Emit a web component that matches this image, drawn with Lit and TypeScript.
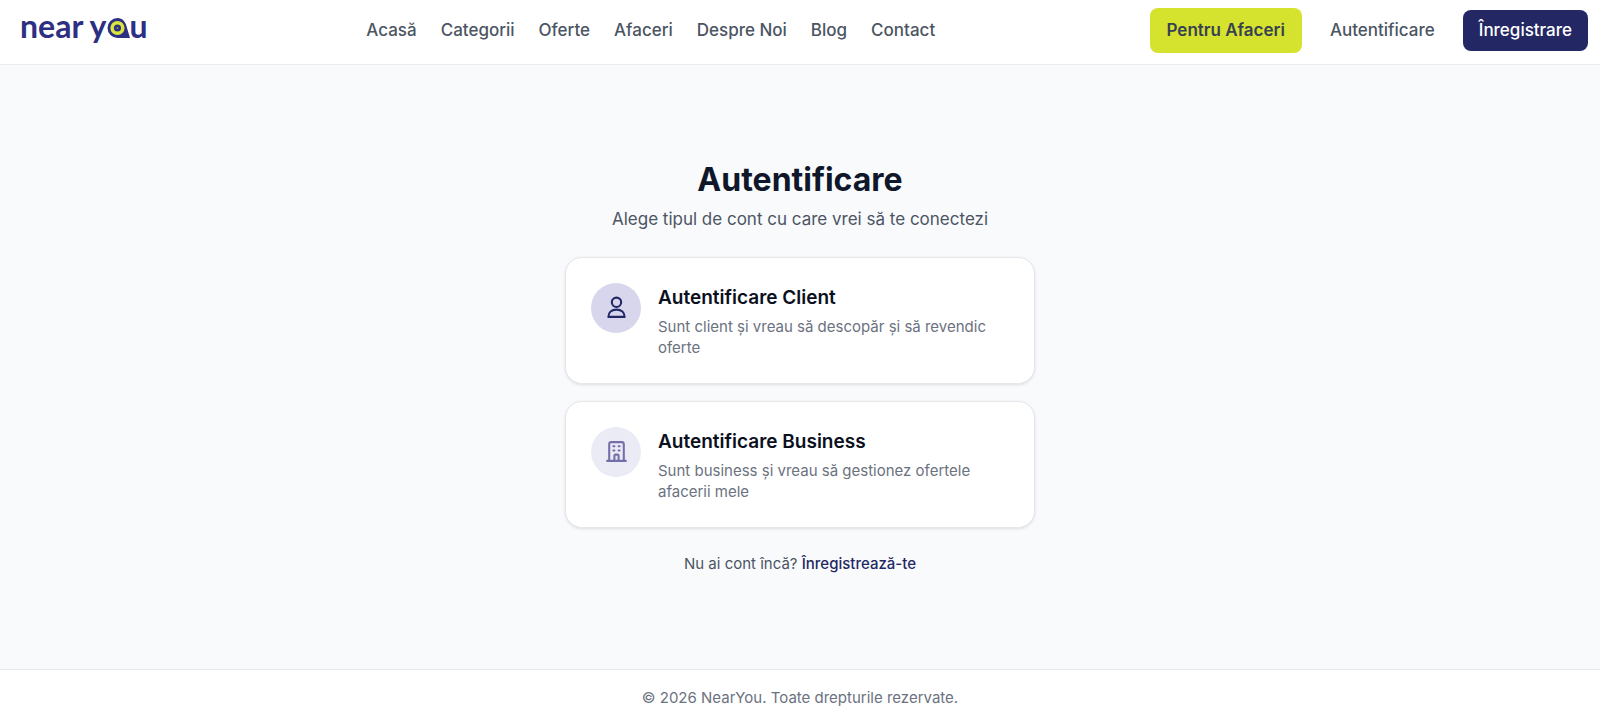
import { LitElement, html, css, svg } from "lit";
import { customElement } from "lit/decorators.js";

const NAV = ["Acasă", "Categorii", "Oferte", "Afaceri", "Despre Noi", "Blog", "Contact"];

const userIcon = svg`
  <circle cx="12" cy="7" r="4.5"></circle>
  <path d="M4.2 21 C4.2 16.6 7.4 14 12 14 C16.6 14 19.8 16.6 19.8 21 Z"></path>`;

const buildingIcon = svg`
  <path d="M19 21V5a2 2 0 0 0-2-2H7a2 2 0 0 0-2 2v16m14 0h2m-2 0h-5m-9 0H3m2 0h5M9 7h1m-1 4h1m4-4h1m-1 4h1m-5 10v-5a1 1 0 0 1 1-1h2a1 1 0 0 1 1 1v5m-4 0h4"></path>`;

const ACCOUNTS = [
  { title: "Autentificare Client", text: "Sunt client și vreau să descopăr și să revendic oferte", icon: userIcon, tone: "client" },
  { title: "Autentificare Business", text: "Sunt business și vreau să gestionez ofertele afacerii mele", icon: buildingIcon, tone: "company" },
];

@customElement("app-root")
export class AppRoot extends LitElement {
  static styles = css`
    :host {
      display: flex;
      flex-direction: column;
      min-height: 100vh;
      background: #f9fafc;
      color: #4b5563;
      font-family: Inter, sans-serif;
      font-size: 17px;
      line-height: 25px;
    }
    * { box-sizing: border-box; }
    a { color: inherit; text-decoration: none; }
    .header {
      display: flex;
      justify-content: space-between;
      align-items: center;
      min-height: 65px;
      padding: 0 12px 4px 20px;
      background: #fff;
      border-bottom: 1px solid #e8ebf0;
    }
    .logo {
      display: flex;
      align-items: baseline;
      min-width: 132px;
      padding-bottom: 8px;
      color: #2c2f82;
      font-family: Lato, sans-serif;
      font-weight: 700;
      font-size: 32px;
      line-height: 40px;
    }
    .pin { width: 23px; height: 20px; }
    .nav { display: flex; gap: 24px; font-weight: 500; }
    .actions { display: flex; align-items: center; font-weight: 500; }
    .partners {
      padding: 10px 17px;
      border-radius: 8px;
      background: #d6e32e;
      color: #374151;
      font-weight: 600;
    }
    .login { padding: 8px 28px; }
    .register {
      padding: 8px 16px;
      border-radius: 8px;
      background: #232864;
      color: #fff;
    }
    .main {
      flex: 1;
      display: flex;
      flex-direction: column;
      align-items: center;
      justify-content: center;
      padding: 0 20px;
    }
    .panel { width: 100%; max-width: 470px; text-align: center; }
    .title {
      margin: 0 0 8px;
      color: #0f172a;
      font-size: 32px;
      font-weight: 700;
      line-height: 38px;
    }
    .subtitle { margin: 0 0 25px; }
    .cards { display: grid; gap: 17px; margin-bottom: 25px; }
    .card {
      display: flex;
      gap: 17px;
      padding: 25px;
      border: 1px solid #e5e7eb;
      border-radius: 17px;
      background: #fff;
      box-shadow: 0 1px 3px rgba(15, 23, 42, 0.12);
      text-align: left;
    }
    .badge {
      flex: none;
      display: grid;
      place-items: center;
      width: 50px;
      height: 50px;
      border-radius: 50%;
    }
    .client { background: #d7d6ed; color: #232864; }
    .company { background: #ebebf5; color: #746fab; }
    .icon {
      width: 25px;
      height: 25px;
      fill: none;
      stroke: currentColor;
      stroke-width: 2;
      stroke-linecap: round;
      stroke-linejoin: round;
    }
    .card-title {
      margin: 0 0 4px;
      color: #0b1020;
      font-size: 19px;
      font-weight: 600;
      line-height: 29px;
    }
    .card-text { margin: 0; color: #6b7280; font-size: 15px; line-height: 21px; }
    .note { margin: 0; font-size: 15px; line-height: 21px; }
    .note-link { color: #232864; font-weight: 500; }
    .footer {
      padding: 17px 16px 12px;
      border-top: 1px solid #e5e7eb;
      background: #fff;
      color: #6b7280;
      font-size: 15px;
      line-height: 21px;
      text-align: center;
    }
  `;

  render() {
    return html`
      <header class="header">
        <a class="logo" href="#" aria-label="near you">
          <span>near y</span>
          <svg class="pin" viewBox="0 0 22 19" aria-hidden="true">
            <path d="M10 0 C15 0 18 4 19 9 L22 19 H10 A9.5 9.5 0 0 1 10 0Z" fill="#2c2f82"></path>
            <circle cx="10" cy="9.5" r="6.8" fill="#dbe63c"></circle>
            <circle cx="10" cy="9.5" r="3.4" fill="#2c2f82"></circle>
            <circle cx="10" cy="9.5" r="1" fill="#8b9150"></circle>
          </svg>
          <span>u</span>
        </a>
        <nav class="nav">${NAV.map((n) => html`<a href="#">${n}</a>`)}</nav>
        <div class="actions">
          <a class="partners" href="#">Pentru Afaceri</a>
          <a class="login" href="#">Autentificare</a>
          <a class="register" href="#">Înregistrare</a>
        </div>
      </header>
      <main class="main">
        <div class="panel">
          <h1 class="title">Autentificare</h1>
          <p class="subtitle">Alege tipul de cont cu care vrei să te conectezi</p>
          <div class="cards">
            ${ACCOUNTS.map(
              (a) => html`
                <a class="card" href="#">
                  <span class="badge ${a.tone}">
                    <svg class="icon" viewBox="0 0 24 24" aria-hidden="true">${a.icon}</svg>
                  </span>
                  <div>
                    <h2 class="card-title">${a.title}</h2>
                    <p class="card-text">${a.text}</p>
                  </div>
                </a>`
            )}
          </div>
          <p class="note">Nu ai cont încă? <a class="note-link" href="#">Înregistrează-te</a></p>
        </div>
      </main>
      <footer class="footer">© 2026 NearYou. Toate drepturile rezervate.</footer>
    `;
  }
}
